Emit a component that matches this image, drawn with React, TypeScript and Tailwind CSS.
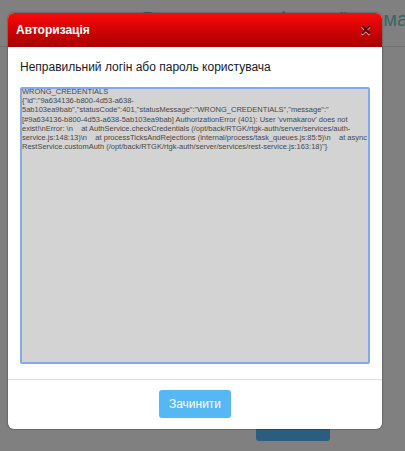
export default function App() {
  const details =
    'WRONG_CREDENTIALS\n{"id":"9a634136-b800-4d53-a638-5ab103ea9bab","statusCode":401,"statusMessage":"WRONG_CREDENTIALS","message":"[#9a634136-b800-4d53-a638-5ab103ea9bab] AuthorizationError (401): User \'vvmakarov\' does not exist!\\nError: \\n    at AuthService.checkCredentials (/opt/back/RTGK/rtgk-auth/server/services/auth-service.js:148:13)\\n    at processTicksAndRejections (internal/process/task_queues.js:85:5)\\n    at async RestService.customAuth (/opt/back/RTGK/rtgk-auth/server/services/rest-service.js:163:18)"}';

  return (
    <div className="relative h-[451px] w-[405px] overflow-hidden bg-[#808080] font-['Liberation_Sans',sans-serif]">
      {/* Page behind the overlay */}
      <div className="h-[47px] overflow-hidden border-b border-[#707070] pt-[6px]">
        <h1 className="flex whitespace-nowrap pl-[142px] text-[20px] leading-[26px] text-[#3b6664]">
          <span>В</span>
          <span className="ml-[126px]">і</span>
          <span className="ml-[55px]">ї</span>
          <span className="ml-[37px]">ма,</span>
        </h1>
      </div>
      <div className="flex justify-end pr-[75px] pt-[370px]">
        <button className="h-[24px] w-[74px] rounded-b-[3px] bg-[#2a5d7e]" />
      </div>

      {/* Modal */}
      <div className="absolute left-[8px] top-[13px] flex h-[416px] w-[374px] flex-col overflow-hidden rounded-[6px] bg-white shadow-[0_0_2px_rgba(0,0,0,0.6)]">
        <div className="flex h-[34px] shrink-0 items-center justify-between bg-gradient-to-b from-[#fb0a0a] to-[#a80000] pl-[8px] pr-[11px]">
          <span className="text-[12px] font-bold text-white">Авторизація</span>
          <span className="text-[18px] font-bold leading-none text-[#5c0505] [text-shadow:0_1px_0_#ffb0b0]">×</span>
        </div>

        <div className="flex flex-1 flex-col px-[12px] pb-[15px] pt-[11px]">
          <p className="text-[12px] leading-[18px] text-[#16202a]">Неправильний логін або пароль користувача</p>
          <div className="mt-[11px] flex-1 rounded-[2px] border-2 border-[#85a9e8] bg-[#d3d3d3]">
            <p className="-mt-[2px] whitespace-pre-wrap break-words text-[7.5px] leading-[9.17px] text-[#484848]">
              {details}
            </p>
          </div>
        </div>

        <div className="flex h-[50px] shrink-0 items-start justify-center border-t border-[#e0e0e0] pt-[10px]">
          <button className="h-[28px] w-[72px] rounded-[3px] bg-[#56b7f5] text-[12px] text-white">Зачинити</button>
        </div>
      </div>
    </div>
  );
}
